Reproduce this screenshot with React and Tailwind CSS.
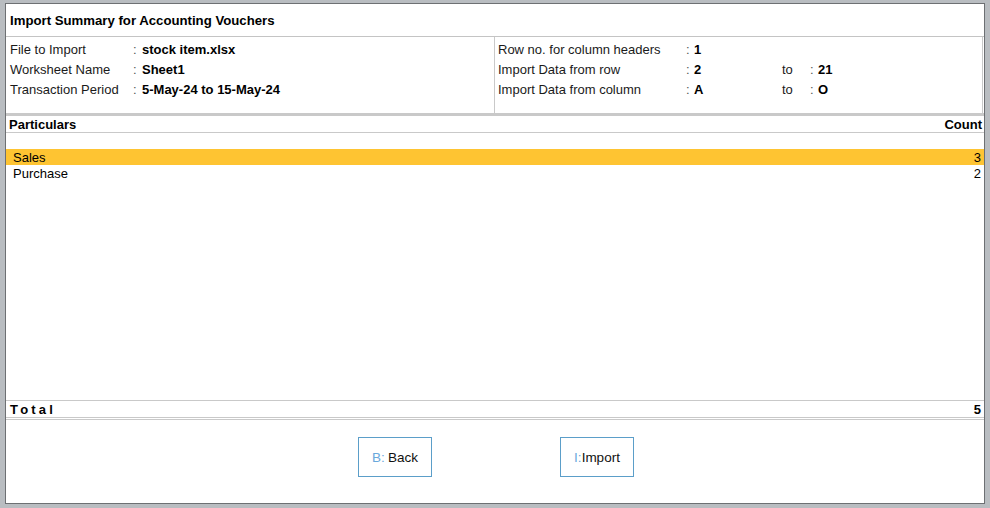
import React from 'react';

const font = { fontFamily: '"Liberation Sans", Arial, sans-serif' };

const leftInfo = [
  { label: 'File to Import', value: 'stock item.xlsx' },
  { label: 'Worksheet Name', value: 'Sheet1' },
  { label: 'Transaction Period', value: '5-May-24 to 15-May-24' },
];

const rightInfo = [
  { label: 'Row no. for column headers', value: '1' },
  { label: 'Import Data from row', value: '2', to: '21' },
  { label: 'Import Data from column', value: 'A', to: 'O' },
];

const rows = [
  { name: 'Sales', count: 3, active: true },
  { name: 'Purchase', count: 2 },
];

const ActionButton = ({ hotkey, label, spaced }) => (
  <button className="w-[74px] h-[40px] border border-[#5b9ec9] bg-white flex items-center justify-center pt-[2px] text-[13.5px] text-[#111]">
    <span className="text-[#6aa8dc]">{hotkey}:</span>
    {spaced ? <span className="ml-[3px]">{label}</span> : <span>{label}</span>}
  </button>
);

export default function App() {
  return (
    <div className="w-[990px] h-[508px] bg-[#b9bdc1] pt-[3px] pl-[5px] text-black" style={font}>
      <div className="w-[980px] h-[501px] border border-[#6d7073] bg-white flex flex-col">
        {/* title */}
        <div className="h-[33px] border-b border-[#c4c4c4] flex items-center pl-[4px] pt-[1px] text-[13.2px] font-bold">
          Import Summary for Accounting Vouchers
        </div>

        {/* info */}
        <div className="h-[79px] border-b-[3px] border-[#c9c9c9] flex">
          <div className="w-[489px] border-r border-[#c9c9c9] pl-[4px] pt-[3px]">
            {leftInfo.map((r) => (
              <div key={r.label} className="h-[20px] flex items-center text-[13px]">
                <span className="w-[123px] text-[#1a1a1a]">{r.label}</span>
                <span className="w-[9px] text-[#555]">:</span>
                <span className="font-bold">{r.value}</span>
              </div>
            ))}
          </div>
          <div className="flex-1 mr-[1px] border-r border-[#c9c9c9] pl-[3px] pt-[3px]">
            {rightInfo.map((r) => (
              <div key={r.label} className="h-[20px] flex items-center text-[13px]">
                <span className="w-[188px] text-[#1a1a1a]">{r.label}</span>
                <span className="w-[8px] text-[#555]">:</span>
                <span className="w-[88px] font-bold">{r.value}</span>
                {r.to && (
                  <>
                    <span className="w-[28px] text-[#1a1a1a]">to</span>
                    <span className="w-[8px] text-[#555]">:</span>
                    <span className="font-bold">{r.to}</span>
                  </>
                )}
              </div>
            ))}
          </div>
        </div>

        {/* column header */}
        <div className="h-[17px] border-b border-[#c9c9c9] flex items-center justify-between pl-[3px] pr-[2px] pt-[1px] text-[13px] font-bold">
          <span>Particulars</span>
          <span>Count</span>
        </div>

        {/* list */}
        <div className="flex-1 pt-[16px]">
          {rows.map((r) => (
            <div
              key={r.name}
              className={
                'h-[16px] flex items-center justify-between pl-[7px] pr-[3px] pt-[1px] text-[13px] ' +
                (r.active ? 'bg-[#fec432]' : '')
              }
            >
              <span>{r.name}</span>
              <span>{r.count}</span>
            </div>
          ))}
        </div>

        {/* total */}
        <div className="h-[18px] border-y border-[#c9c9c9] flex items-center justify-between pl-[4px] pr-[3px] pt-[1px] text-[13px] font-bold">
          <span className="tracking-[3.2px]">Total</span>
          <span>5</span>
        </div>
        <div className="h-[2px] border-b border-[#c9c9c9]" />

        {/* buttons */}
        <div className="h-[83px] pt-[17px] pl-[2px] flex justify-center gap-[128px]">
          <ActionButton hotkey="B" label="Back" spaced />
          <ActionButton hotkey="I" label="Import" />
        </div>
      </div>
    </div>
  );
}
